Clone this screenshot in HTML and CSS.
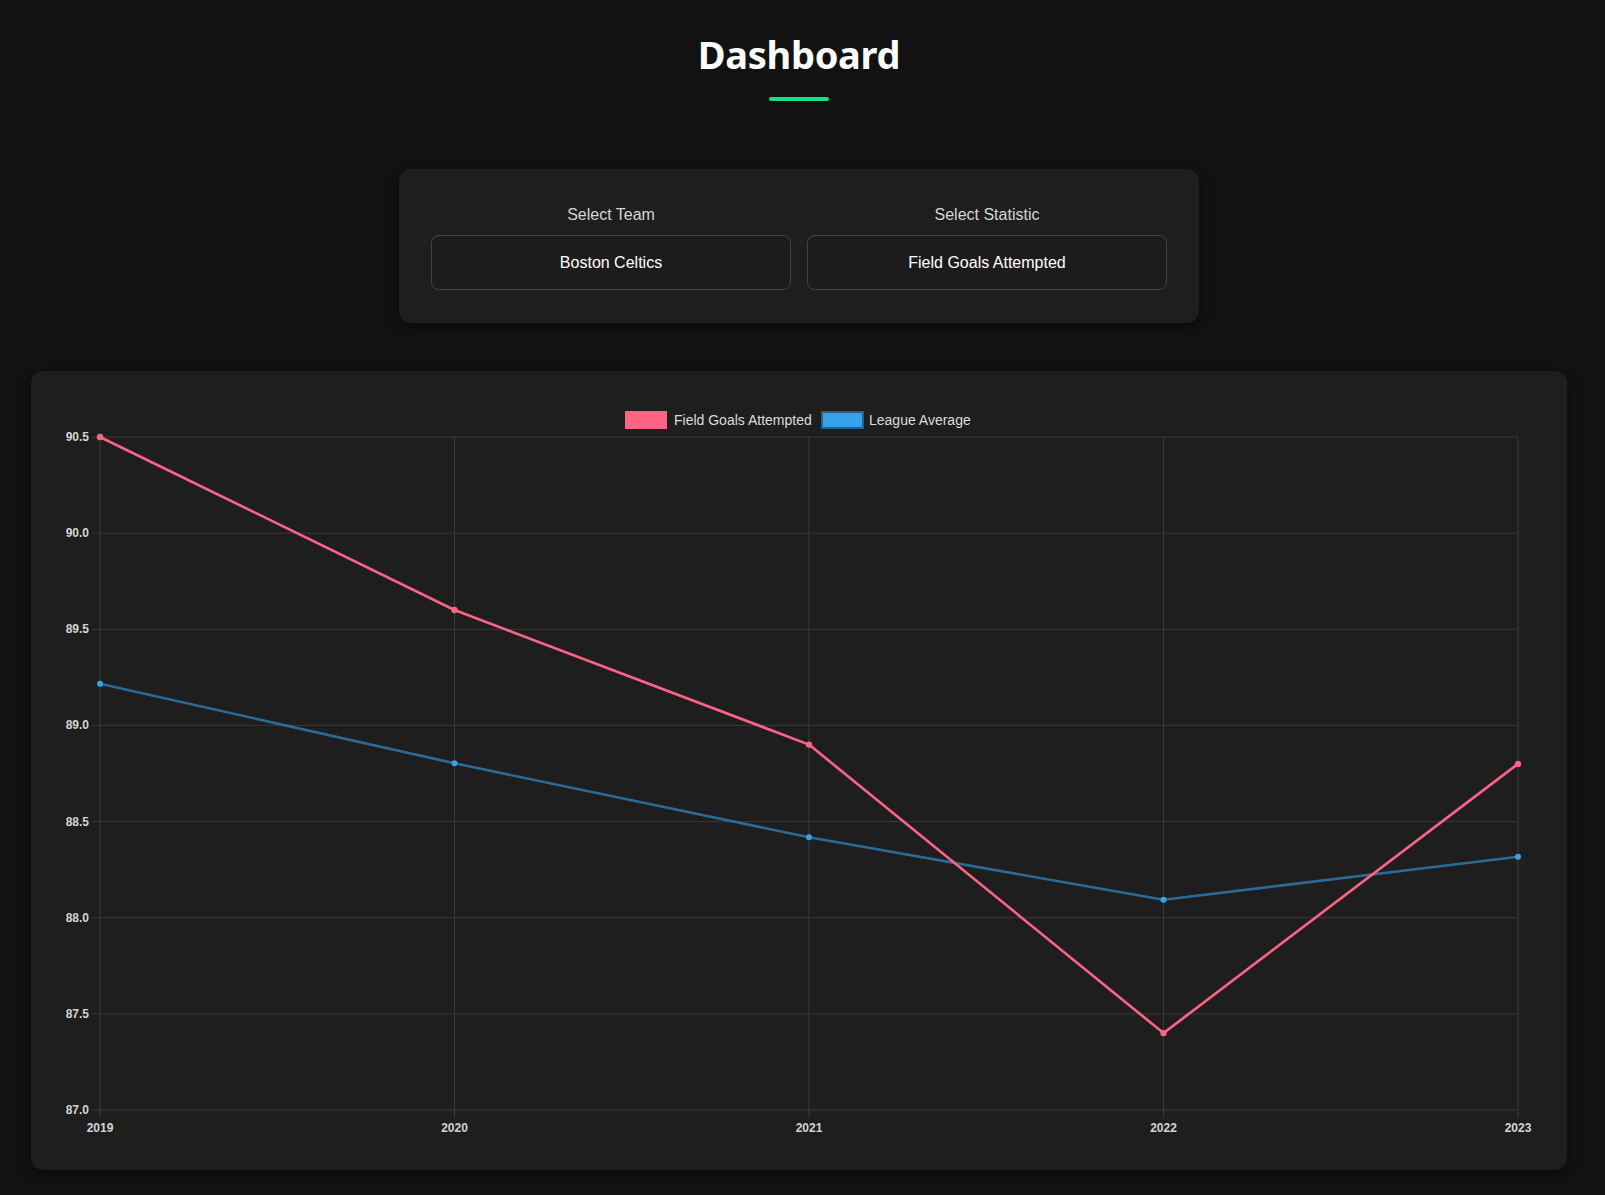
FILE: index.html
```html
<!DOCTYPE html>
<html lang="en">
<head>
<meta charset="utf-8">
<title>Dashboard</title>
<link rel="stylesheet" href="styles.css">
</head>
<body>
<div class="page">
  <header class="header">
    <h1 class="title">Dashboard</h1>
    <div class="title-bar"></div>
  </header>

  <section class="controls">
    <div class="control">
      <label class="control-label">Select Team</label>
      <div class="select">Boston Celtics</div>
    </div>
    <div class="control">
      <label class="control-label">Select Statistic</label>
      <div class="select">Field Goals Attempted</div>
    </div>
  </section>

  <section class="chart-card">
    <svg class="chart" width="1536" height="799" viewBox="0 0 1536 799" xmlns="http://www.w3.org/2000/svg">
      <!-- legend -->
      <rect x="595" y="41" width="40" height="16" fill="#ff6384" stroke="#ff6384" stroke-width="2"/>
      <text class="legend-text" x="643" y="54">Field Goals Attempted</text>
      <rect x="791" y="41" width="41" height="16" fill="#36a2eb" stroke="#2a5f86" stroke-width="2"/>
      <text class="legend-text" x="838" y="54">League Average</text>

      <!-- horizontal grid -->
      <g class="grid">
        <line x1="61" y1="66" x2="1487" y2="66"/>
        <line x1="61" y1="162.1" x2="1487" y2="162.1"/>
        <line x1="61" y1="258.3" x2="1487" y2="258.3"/>
        <line x1="61" y1="354.4" x2="1487" y2="354.4"/>
        <line x1="61" y1="450.6" x2="1487" y2="450.6"/>
        <line x1="61" y1="546.7" x2="1487" y2="546.7"/>
        <line x1="61" y1="642.9" x2="1487" y2="642.9"/>
        <line x1="61" y1="739" x2="1487" y2="739"/>
        <!-- vertical grid -->
        <line x1="69" y1="66" x2="69" y2="747"/>
        <line x1="423.5" y1="66" x2="423.5" y2="747"/>
        <line x1="778" y1="66" x2="778" y2="747"/>
        <line x1="1132.5" y1="66" x2="1132.5" y2="747"/>
        <line x1="1487" y1="66" x2="1487" y2="747"/>
      </g>

      <!-- y labels -->
      <g class="tick" text-anchor="end">
        <text x="58" y="70">90.5</text>
        <text x="58" y="166">90.0</text>
        <text x="58" y="262">89.5</text>
        <text x="58" y="358">89.0</text>
        <text x="58" y="455">88.5</text>
        <text x="58" y="551">88.0</text>
        <text x="58" y="647">87.5</text>
        <text x="58" y="743">87.0</text>
      </g>
      <!-- x labels -->
      <g class="tick" text-anchor="middle">
        <text x="69" y="761">2019</text>
        <text x="423.5" y="761">2020</text>
        <text x="778" y="761">2021</text>
        <text x="1132.5" y="761">2022</text>
        <text x="1487" y="761">2023</text>
      </g>

      <!-- league average -->
      <polyline class="line-blue" points="69,312.8 423.5,392.3 778,466.3 1132.5,528.8 1487,485.8"/>
      <g fill="#36a2eb">
        <circle cx="69" cy="312.8" r="3"/>
        <circle cx="423.5" cy="392.3" r="3"/>
        <circle cx="778" cy="466.3" r="3"/>
        <circle cx="1132.5" cy="528.8" r="3"/>
        <circle cx="1487" cy="485.8" r="3"/>
      </g>

      <!-- team -->
      <polyline class="line-pink" points="69,66 423.5,239 778,373.6 1132.5,662.1 1487,392.9"/>
      <g fill="#ff6384">
        <circle cx="69" cy="66" r="3.2"/>
        <circle cx="423.5" cy="239" r="3.2"/>
        <circle cx="778" cy="373.6" r="3.2"/>
        <circle cx="1132.5" cy="662.1" r="3.2"/>
        <circle cx="1487" cy="392.9" r="3.2"/>
      </g>
    </svg>
  </section>
</div>
</body>
</html>
```

FILE: styles.css
```css
* { box-sizing: border-box; }

html, body {
  margin: 0;
  padding: 0;
  background: #121212;
}

body {
  font-family: "Liberation Sans", Arial, sans-serif;
  color: #e0e0e0;
}

.page {
  width: 1598px;
  padding: 0 31px 25px;
  display: flex;
  flex-direction: column;
  align-items: center;
}

.header {
  display: flex;
  flex-direction: column;
  align-items: center;
  padding-top: 28px;
}

.title {
  margin: 0;
  font-family: "Noto Sans", "Open Sans", sans-serif;
  font-weight: 700;
  font-size: 38px;
  line-height: 52px;
  color: #ffffff;
  letter-spacing: -0.3px;
}

.title-bar {
  width: 60px;
  height: 4px;
  border-radius: 2px;
  background: #10e38c;
  margin-top: 17px;
}

.controls {
  margin-top: 68px;
  width: 800px;
  padding: 32px 32px 33px;
  background: #1e1e1e;
  border-radius: 12px;
  box-shadow: 0 4px 12px rgba(0, 0, 0, 0.45);
  display: grid;
  grid-template-columns: 1fr 1fr;
  gap: 16px;
}

.control {
  display: flex;
  flex-direction: column;
  align-items: stretch;
}

.control-label {
  text-align: center;
  font-size: 16px;
  line-height: 18px;
  color: #d6d6d6;
  margin-top: 5px;
  margin-bottom: 11px;
}

.select {
  height: 55px;
  border: 1px solid #444444;
  border-radius: 8px;
  background: #1c1c1c;
  color: #ffffff;
  font-size: 16px;
  display: flex;
  align-items: center;
  justify-content: center;
}

.chart-card {
  margin-top: 48px;
  width: 1536px;
  height: 799px;
  background: #1e1e1e;
  border-radius: 12px;
  box-shadow: 0 4px 12px rgba(0, 0, 0, 0.45);
  overflow: hidden;
}

.chart {
  display: block;
}

.legend-text {
  font-family: "Liberation Sans", Arial, sans-serif;
  font-size: 14px;
  fill: #dddddd;
}

.grid line {
  stroke: #3a3a3a;
  stroke-width: 1;
}

.tick text {
  font-family: "Liberation Sans", Arial, sans-serif;
  font-size: 12px;
  font-weight: 700;
  fill: #d4d4d4;
}

.line-blue {
  fill: none;
  stroke: rgba(54, 162, 235, 0.58);
  stroke-width: 2.6;
  stroke-linejoin: round;
}

.line-pink {
  fill: none;
  stroke: #ff6384;
  stroke-width: 2.6;
  stroke-linejoin: round;
}
```
